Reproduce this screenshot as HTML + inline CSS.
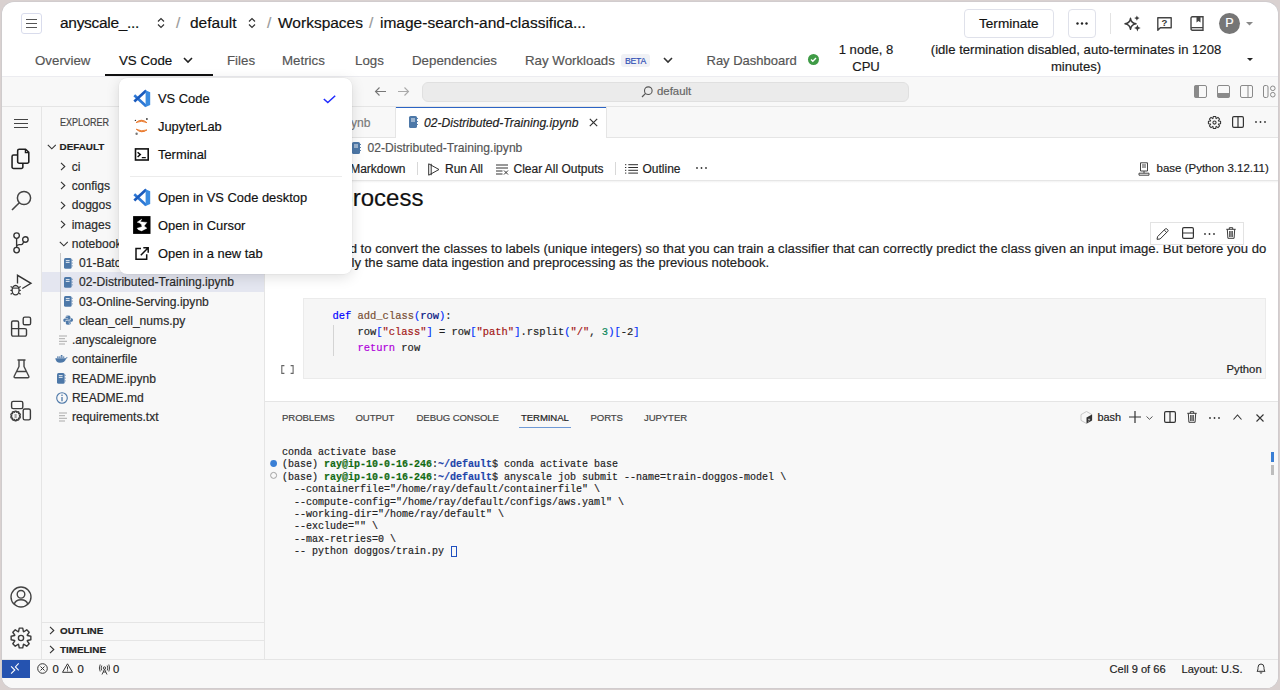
<!DOCTYPE html>
<html><head><meta charset="utf-8">
<style>
*{box-sizing:border-box;margin:0;padding:0}
html,body{width:1280px;height:690px;overflow:hidden;background:#d9d1d0;font-family:"Liberation Sans",sans-serif;color:#1f1f1f}
.a{position:absolute}
.frame{position:absolute;left:2px;top:2px;width:1276px;height:686px;background:#fff;border-radius:12px;overflow:hidden;box-shadow:0 0 0 0.6px #c9c8cc}
.pg{position:absolute;left:-2px;top:-2px;width:1280px;height:690px}
.t{position:absolute;white-space:nowrap;line-height:1;-webkit-text-stroke:0.18px currentColor}
svg{position:absolute;overflow:visible}
.mono{font-family:"Liberation Mono",monospace}
.nav{font-size:13.3px;color:#555;top:54px}
.hd{font-size:15.5px;color:#111;top:15px}
.sb{font-size:12.1px;color:#2a2a2a}
.ptab{font-size:9.6px;color:#444;top:413.3px;letter-spacing:-0.1px}
.term{font-size:10px;color:#222;left:282px;white-space:pre}
.code{font-family:"Liberation Mono",monospace;font-size:10.45px;color:#1f1f1f}
</style></head><body>
<div class="frame"><div class="pg">

<!-- ===== HEADER ===== -->
<div class="a" style="left:21px;top:13px;width:20.5px;height:20.5px;border:1px solid #d9dcec;border-radius:3px"></div>
<svg style="left:26px;top:19px" width="11" height="9"><path d="M0 0.5H11M0 4.5H11M0 8.5H11" stroke="#555" stroke-width="1"/></svg>
<div class="t hd" style="left:60px;letter-spacing:-0.3px">anyscale_...</div>
<svg style="left:157px;top:17px" width="8" height="12"><path d="M1 4.5L4 1.5L7 4.5M1 7.5L4 10.5L7 7.5" fill="none" stroke="#333" stroke-width="1.2"/></svg>
<div class="t hd" style="left:176px;color:#999">/</div>
<div class="t hd" style="left:190px">default</div>
<svg style="left:248px;top:17px" width="8" height="12"><path d="M1 4.5L4 1.5L7 4.5M1 7.5L4 10.5L7 7.5" fill="none" stroke="#333" stroke-width="1.2"/></svg>
<div class="t hd" style="left:267px;color:#999">/</div>
<div class="t hd" style="left:278px">Workspaces</div>
<div class="t hd" style="left:369px;color:#999">/</div>
<div class="t hd" style="left:380px">image-search-and-classifica...</div>

<div class="a" style="left:964px;top:9px;width:90px;height:28.5px;border:1px solid #dfe1ea;border-radius:4px"></div>
<div class="t" style="left:979px;top:16.5px;font-size:13.6px;color:#111">Terminate</div>
<div class="a" style="left:1068px;top:9px;width:28px;height:28.5px;border:1px solid #dfe1ea;border-radius:4px"></div>
<svg style="left:1076px;top:22px" width="12" height="3"><circle cx="1.5" cy="1.5" r="1.2" fill="#222"/><circle cx="6" cy="1.5" r="1.2" fill="#222"/><circle cx="10.5" cy="1.5" r="1.2" fill="#222"/></svg>
<div class="a" style="left:1110px;top:13px;width:1px;height:21px;background:#e3e3e3"></div>
<!-- sparkle -->
<svg style="left:1125px;top:16px" width="16" height="16" viewBox="0 0 16 16"><path d="M5.5 2.3Q6.2 7.1 11 7.8Q6.2 8.5 5.5 13.3Q4.8 8.5 0 7.8Q4.8 7.1 5.5 2.3Z" fill="none" stroke="#3a3a3a" stroke-width="1.45" stroke-linejoin="round"/><path d="M11.9 -0.6L12.7 1.3L14.6 2.1L12.7 2.9L11.9 4.8L11.1 2.9L9.2 2.1L11.1 1.3Z" fill="#3a3a3a"/><path d="M12.4 8.8L13.4 11.1L15.7 12.1L13.4 13.1L12.4 15.4L11.4 13.1L9.1 12.1L11.4 11.1Z" fill="#3a3a3a"/></svg>
<!-- help bubble -->
<svg style="left:1157px;top:17px" width="15" height="14" viewBox="0 0 15 14"><path d="M0.8 13.2V0.8H14.2V10.7H3.3Z" fill="none" stroke="#444" stroke-width="1.4" stroke-linejoin="round"/><text x="7.4" y="9.3" font-size="9.6" font-family="Liberation Sans" font-weight="bold" text-anchor="middle" fill="#3a3a3a">?</text></svg>
<!-- book -->
<svg style="left:1190px;top:16px" width="14" height="15" viewBox="0 0 14 15"><path d="M1 12.2V2.2Q1 0.8 2.4 0.8H13V14.2H2.4Q1 14.2 1 12.8Q1 11.6 2.4 11.6H13" fill="none" stroke="#444" stroke-width="1.4"/><path d="M6.5 1H10.5V6.5L8.5 5L6.5 6.5Z" fill="#444"/></svg>
<div class="a" style="left:1219px;top:13px;width:21px;height:21px;border-radius:50%;background:#767676"></div>
<div class="t" style="left:1225.3px;top:16.9px;font-size:12.6px;color:#fff">P</div>
<svg style="left:1246px;top:22px" width="7" height="4"><path d="M0 0H7L3.5 3.5Z" fill="#888"/></svg>

<!-- nav tabs -->
<div class="t nav" style="left:35px">Overview</div>
<div class="t nav" style="left:119px;color:#111">VS Code</div>
<svg style="left:183px;top:57px" width="10" height="7"><path d="M1 1L5 5L9 1" fill="none" stroke="#222" stroke-width="1.6"/></svg>
<div class="a" style="left:105px;top:73.5px;width:108px;height:2.5px;background:#111"></div>
<div class="t nav" style="left:227px">Files</div>
<div class="t nav" style="left:282px">Metrics</div>
<div class="t nav" style="left:355px">Logs</div>
<div class="t nav" style="left:412px">Dependencies</div>
<div class="t nav" style="left:525px">Ray Workloads</div>
<div class="a" style="left:621px;top:53.5px;width:29px;height:13px;background:#f0f1f5;border-radius:3px"></div>
<div class="t" style="left:625px;top:56.7px;font-size:8.7px;color:#2f4fb5;letter-spacing:-0.25px">BETA</div>
<svg style="left:663px;top:57px" width="10" height="7"><path d="M1 1L5 5L9 1" fill="none" stroke="#333" stroke-width="1.6"/></svg>
<div class="t nav" style="left:706.5px;font-size:13px;top:54.3px">Ray Dashboard</div>
<svg style="left:808px;top:53.5px" width="11" height="11"><circle cx="5.5" cy="5.5" r="5.5" fill="#3f9b46"/><path d="M3 5.6L4.8 7.3L8 4" fill="none" stroke="#fff" stroke-width="1.4"/></svg>
<div class="t" style="left:820px;top:41px;width:92px;text-align:center;font-size:13.1px;line-height:17px;color:#1a1a1a;white-space:normal">1 node, 8<br>CPU</div>
<div class="t" style="left:926px;top:41px;width:300px;text-align:center;font-size:13.1px;line-height:17px;color:#1a1a1a">(idle termination disabled, auto-terminates in 1208<br>minutes)</div>
<svg style="left:1247px;top:57.5px" width="6" height="3"><path d="M0 0H6L3 3Z" fill="#222"/></svg>
<div class="a" style="left:0;top:76px;width:1280px;height:1px;background:#ececf0"></div>

<!-- ===== VS CODE ===== -->
<div class="a" style="left:0;top:77px;width:1280px;height:613px;background:#f8f8f8"></div>
<!-- title bar -->
<div class="a" style="left:0;top:106px;width:1280px;height:1px;background:#e5e5e5"></div>
<svg style="left:374px;top:86px" width="13" height="11"><path d="M12 5.5H1.5M5.5 1.5L1.5 5.5L5.5 9.5" fill="none" stroke="#777" stroke-width="1.1"/></svg>
<svg style="left:397px;top:86px" width="13" height="11"><path d="M1 5.5H11.5M7.5 1.5L11.5 5.5L7.5 9.5" fill="none" stroke="#aaa" stroke-width="1.1"/></svg>
<div class="a" style="left:421.5px;top:81.5px;width:487px;height:20.5px;background:#ebebeb;border:1px solid #e0e0e0;border-radius:6px"></div>
<svg style="left:641px;top:85.5px" width="12" height="12"><circle cx="7.3" cy="4.7" r="3.8" fill="none" stroke="#555" stroke-width="1.1"/><path d="M4.6 7.4L1 11" stroke="#555" stroke-width="1.2"/></svg>
<div class="t" style="left:657px;top:86px;font-size:11.4px;color:#666">default</div>
<!-- layout icons -->
<svg style="left:1194px;top:85px" width="13" height="13"><rect x="0.5" y="0.5" width="12" height="12" rx="1.5" fill="none" stroke="#8a8a8a"/><rect x="0.5" y="0.5" width="4.5" height="12" fill="#8a8a8a"/></svg>
<svg style="left:1217px;top:85px" width="13" height="13"><rect x="0.5" y="0.5" width="12" height="12" rx="1.5" fill="none" stroke="#8a8a8a"/><rect x="0.5" y="8" width="12" height="4.5" fill="#8a8a8a"/></svg>
<svg style="left:1240px;top:85px" width="13" height="13"><rect x="0.5" y="0.5" width="12" height="12" rx="1.5" fill="none" stroke="#8a8a8a"/><path d="M8 0.5V12.5" stroke="#8a8a8a"/></svg>
<svg style="left:1263px;top:85px" width="13" height="13"><rect x="0.5" y="0.5" width="4.5" height="12" rx="1.5" fill="none" stroke="#8a8a8a"/><circle cx="9.8" cy="3.3" r="2.3" fill="none" stroke="#8a8a8a"/><circle cx="9.8" cy="9.7" r="2.3" fill="none" stroke="#8a8a8a"/></svg>

<!-- activity bar -->
<div class="a" style="left:41px;top:107px;width:1px;height:552px;background:#e5e5e5"></div>
<svg style="left:14px;top:119px" width="14" height="9"><path d="M0 0.5H14M0 4.5H14M0 8.5H14" stroke="#444" stroke-width="1"/></svg>
<!-- files -->
<svg style="left:6px;top:142px" width="30" height="30" viewBox="0 0 30 30"><path d="M13.2 7.2H19.6L22.8 10.4V19.7A1.55 1.55 0 0 1 21.25 21.25H13.2A1.55 1.55 0 0 1 11.65 19.7V8.75A1.55 1.55 0 0 1 13.2 7.2Z" fill="none" stroke="#1f1f1f" stroke-width="1.55" stroke-linejoin="round"/><path d="M19.4 7.6V10.6H22.4" fill="none" stroke="#1f1f1f" stroke-width="1.3"/><path d="M11.65 12.9H7.6A1.55 1.55 0 0 0 6.05 14.45V24.9A1.55 1.55 0 0 0 7.6 26.45H15.3A1.55 1.55 0 0 0 16.85 24.9V21.25" fill="none" stroke="#1f1f1f" stroke-width="1.55"/></svg>
<!-- search -->
<svg style="left:11px;top:190px" width="21" height="21" viewBox="0 0 21 21"><circle cx="13" cy="8" r="6.6" fill="none" stroke="#444" stroke-width="1.5"/><path d="M8.3 12.7L1 20" stroke="#444" stroke-width="1.6"/></svg>
<!-- source control -->
<svg style="left:12px;top:232px" width="18" height="22" viewBox="0 0 18 22"><circle cx="4.6" cy="3.6" r="2.75" fill="none" stroke="#333" stroke-width="1.35"/><circle cx="13.4" cy="7.5" r="2.75" fill="none" stroke="#333" stroke-width="1.35"/><circle cx="4.6" cy="18.1" r="2.75" fill="none" stroke="#333" stroke-width="1.35"/><path d="M4.6 6.35V15.35M11.8 9.7L10.6 11.9Q10.2 12.6 9.3 12.6H7Q4.9 12.7 4.6 14.6" fill="none" stroke="#333" stroke-width="1.35"/></svg>
<!-- run debug -->
<svg style="left:10px;top:274px" width="22" height="22" viewBox="0 0 22 22"><path d="M7.5 9.6V1.3L21 9.3L12.3 14.5" fill="none" stroke="#333" stroke-width="1.35" stroke-linejoin="miter"/><ellipse cx="5.6" cy="16.2" rx="3.5" ry="4.7" fill="none" stroke="#333" stroke-width="1.3"/><path d="M2.2 14.1H9" stroke="#333" stroke-width="1.1"/><path d="M0.6 12.6L2.4 13.6M10.7 12.6L8.9 13.6M0.4 16.4H2M10.8 16.4H9.2M0.6 20.3L2.4 19.2M10.7 20.3L8.9 19.2" stroke="#333" stroke-width="1.2"/></svg>
<!-- extensions -->
<svg style="left:4px;top:310px" width="34" height="34" viewBox="0 0 34 34"><path d="M9.1 11H13.1A1.5 1.5 0 0 1 14.6 12.5V18.6H21A1.5 1.5 0 0 1 22.5 20.1V24.6A1.5 1.5 0 0 1 21 26.1H9.1A1.5 1.5 0 0 1 7.6 24.6V12.5A1.5 1.5 0 0 1 9.1 11Z M7.6 18.6H14.6V26.1" fill="none" stroke="#3b3b3b" stroke-width="1.4" stroke-linejoin="round"/><rect x="19.2" y="7.1" width="7.4" height="7.7" rx="1.6" fill="none" stroke="#3b3b3b" stroke-width="1.4"/></svg>
<!-- flask -->
<svg style="left:13px;top:359px" width="17" height="20" viewBox="0 0 17 20"><path d="M4.5 1H12.5M6 1V7.5L1.2 17.2Q0.7 18.8 2.3 18.8H14.7Q16.3 18.8 15.8 17.2L11 7.5V1M3.5 12.5H13.5" fill="none" stroke="#444" stroke-width="1.4" stroke-linejoin="round"/></svg>
<!-- remote explorer -->
<svg style="left:4px;top:394px" width="34" height="34" viewBox="0 0 34 34"><rect x="7.6" y="7.35" width="11.2" height="7.25" rx="1.6" fill="none" stroke="#3b3b3b" stroke-width="1.4"/><rect x="19.2" y="15" width="7.2" height="10.9" rx="1.6" fill="none" stroke="#3b3b3b" stroke-width="1.4"/><path d="M10.72 18.10 L10.92 17.05 L12.28 17.05 L12.48 18.10 L13.12 18.31 L13.90 17.57 L15.00 18.38 L14.54 19.34 L14.94 19.89 L16.00 19.75 L16.43 21.05 L15.49 21.56 L15.49 22.24 L16.43 22.75 L16.00 24.05 L14.94 23.91 L14.54 24.46 L15.00 25.42 L13.90 26.23 L13.12 25.49 L12.48 25.70 L12.28 26.75 L10.92 26.75 L10.72 25.70 L10.08 25.49 L9.30 26.23 L8.20 25.42 L8.66 24.46 L8.26 23.91 L7.20 24.05 L6.77 22.75 L7.71 22.24 L7.71 21.56 L6.77 21.05 L7.20 19.75 L8.26 19.89 L8.66 19.34 L8.20 18.38 L9.30 17.57 L10.08 18.31Z" fill="none" stroke="#3b3b3b" stroke-width="1.3" stroke-linejoin="round"/><path d="M10.5 21H12.7M10.5 23H12.7" stroke="#3b3b3b" stroke-width="0.9"/></svg>
<!-- account -->
<svg style="left:10px;top:586px" width="22" height="22" viewBox="0 0 22 22"><circle cx="11" cy="11" r="10" fill="none" stroke="#444" stroke-width="1.4"/><circle cx="11" cy="8.3" r="3.8" fill="none" stroke="#444" stroke-width="1.4"/><path d="M4.2 18.2Q5.5 13.8 11 13.8Q16.5 13.8 17.8 18.2" fill="none" stroke="#444" stroke-width="1.4"/></svg>
<!-- gear -->
<svg style="left:10px;top:627px" width="22" height="22" viewBox="0 0 22 22"><path d="M8.56 4.65 L9.26 1.15 L12.74 1.15 L13.44 4.65 L13.77 4.79 L16.74 2.81 L19.19 5.26 L17.21 8.23 L17.35 8.56 L20.85 9.26 L20.85 12.74 L17.35 13.44 L17.21 13.77 L19.19 16.74 L16.74 19.19 L13.77 17.21 L13.44 17.35 L12.74 20.85 L9.26 20.85 L8.56 17.35 L8.23 17.21 L5.26 19.19 L2.81 16.74 L4.79 13.77 L4.65 13.44 L1.15 12.74 L1.15 9.26 L4.65 8.56 L4.79 8.23 L2.81 5.26 L5.26 2.81 L8.23 4.79Z" fill="none" stroke="#3a3a3a" stroke-width="1.4" stroke-linejoin="round"/><circle cx="11" cy="11" r="2.6" fill="none" stroke="#3a3a3a" stroke-width="1.4"/></svg>

<!-- SECTION:ACTIVITY -->
<!-- BEGIN SIDEBAR -->
<!-- sidebar -->
<div class="a" style="left:264px;top:107px;width:1px;height:552px;background:#e5e5e5"></div>
<div class="t" style="left:59.5px;top:117.6px;font-size:10.2px;color:#444;transform:scaleX(0.885);transform-origin:0 0">EXPLORER</div>
<svg style="left:46.5px;top:144.3px" width="10" height="6"><path d="M0.8 0.8L4.8 4.8L8.8 0.8" fill="none" stroke="#333" stroke-width="1.1"/></svg>
<div class="t" style="left:59.5px;top:141.80px;font-size:9.9px;font-weight:bold;color:#222;letter-spacing:0px">DEFAULT</div>
<div class="a" style="left:42px;top:272.45px;width:222px;height:19.25px;background:#e4e6f0"></div>
<div class="a" style="left:59.5px;top:253.20px;width:1px;height:77.00px;background:#c8c8c8"></div>
<svg style="left:59.5px;top:162.05px" width="6" height="9"><path d="M1 0.8L4.8 4.5L1 8.2" fill="none" stroke="#333" stroke-width="1.1"/></svg>
<div class="t sb" style="left:71.7px;top:160.85px">ci</div>
<svg style="left:59.5px;top:181.3px" width="6" height="9"><path d="M1 0.8L4.8 4.5L1 8.2" fill="none" stroke="#333" stroke-width="1.1"/></svg>
<div class="t sb" style="left:71.7px;top:180.10px">configs</div>
<svg style="left:59.5px;top:200.55px" width="6" height="9"><path d="M1 0.8L4.8 4.5L1 8.2" fill="none" stroke="#333" stroke-width="1.1"/></svg>
<div class="t sb" style="left:71.7px;top:199.35px">doggos</div>
<svg style="left:59.5px;top:219.8px" width="6" height="9"><path d="M1 0.8L4.8 4.5L1 8.2" fill="none" stroke="#333" stroke-width="1.1"/></svg>
<div class="t sb" style="left:71.7px;top:218.60px">images</div>
<svg style="left:58.5px;top:240.55px" width="10" height="6"><path d="M0.8 0.8L4.8 4.8L8.8 0.8" fill="none" stroke="#333" stroke-width="1.1"/></svg>
<div class="t sb" style="left:71.7px;top:237.85px">notebooks</div>
<svg style="left:63.8px;top:257.50px" width="9" height="11" viewBox="0 0 9 11"><rect x="0" y="0" width="7.6" height="10.8" rx="1.5" fill="#4d78a8"/><path d="M1.8 2.6H5.6M1.8 4.4H5.6" stroke="#fff" stroke-width="0.85"/><path d="M8.2 1.8V2.8M8.2 4.6V5.6M8.2 7.4V8.4" stroke="#4d78a8" stroke-width="0.9"/></svg>
<div class="t sb" style="left:79.1px;top:257.10px">01-Batch-Inference.ipynb</div>
<svg style="left:63.8px;top:276.75px" width="9" height="11" viewBox="0 0 9 11"><rect x="0" y="0" width="7.6" height="10.8" rx="1.5" fill="#4d78a8"/><path d="M1.8 2.6H5.6M1.8 4.4H5.6" stroke="#fff" stroke-width="0.85"/><path d="M8.2 1.8V2.8M8.2 4.6V5.6M8.2 7.4V8.4" stroke="#4d78a8" stroke-width="0.9"/></svg>
<div class="t sb" style="left:79.1px;top:276.35px">02-Distributed-Training.ipynb</div>
<svg style="left:63.8px;top:296.00px" width="9" height="11" viewBox="0 0 9 11"><rect x="0" y="0" width="7.6" height="10.8" rx="1.5" fill="#4d78a8"/><path d="M1.8 2.6H5.6M1.8 4.4H5.6" stroke="#fff" stroke-width="0.85"/><path d="M8.2 1.8V2.8M8.2 4.6V5.6M8.2 7.4V8.4" stroke="#4d78a8" stroke-width="0.9"/></svg>
<div class="t sb" style="left:79.1px;top:295.60px">03-Online-Serving.ipynb</div>
<svg style="left:63.0px;top:315.35px" width="10.3" height="10.3" viewBox="0 0 12 12"><path d="M5.8 0.5Q3 0.5 3 2.2V3.6H6V4.2H1.9Q0.3 4.2 0.3 6.2Q0.3 8.3 1.9 8.3H3V6.8Q3 5.5 4.4 5.5H7.4Q8.7 5.5 8.7 4.2V2.2Q8.7 0.5 5.8 0.5Z" fill="#4d78a8"/><path d="M6.2 11.5Q9 11.5 9 9.8V8.4H6V7.8H10.1Q11.7 7.8 11.7 5.8Q11.7 3.7 10.1 3.7H9V5.2Q9 6.5 7.6 6.5H4.6Q3.3 6.5 3.3 7.8V9.8Q3.3 11.5 6.2 11.5Z" fill="#4d78a8"/><circle cx="4.6" cy="1.8" r="0.6" fill="#f8f8f8"/><circle cx="7.4" cy="10.2" r="0.6" fill="#f8f8f8"/></svg>
<div class="t sb" style="left:79.1px;top:314.85px">clean_cell_nums.py</div>
<svg style="left:58.8px;top:334.8px" width="9" height="10"><path d="M0 1H8M0 3.7H6M0 6.3H8M0 9H6" stroke="#aaa" stroke-width="1"/></svg>
<div class="t sb" style="left:71.9px;top:334.10px">.anyscaleignore</div>
<svg style="left:54.8px;top:354.05px" width="13" height="9" viewBox="0 0 13 9"><path d="M0.3 4.2H10.5Q11 3 12.6 3.3Q12.2 4.5 11.2 4.6Q10 8.8 5 8.8Q1 8.8 0.3 4.2Z" fill="#4d78a8"/><path d="M2 2.5H3.6V3.8H2ZM3.9 2.5H5.5V3.8H3.9ZM5.8 2.5H7.4V3.8H5.8ZM7.7 2.5H9.3V3.8H7.7ZM5.8 0.9H7.4V2.2H5.8Z" fill="#4d78a8"/></svg>
<div class="t sb" style="left:71.9px;top:353.35px">containerfile</div>
<svg style="left:56.5px;top:373.00px" width="9" height="11" viewBox="0 0 9 11"><rect x="0" y="0" width="7.6" height="10.8" rx="1.5" fill="#4d78a8"/><path d="M1.8 2.6H5.6M1.8 4.4H5.6" stroke="#fff" stroke-width="0.85"/><path d="M8.2 1.8V2.8M8.2 4.6V5.6M8.2 7.4V8.4" stroke="#4d78a8" stroke-width="0.9"/></svg>
<div class="t sb" style="left:71.9px;top:372.60px">README.ipynb</div>
<svg style="left:55.5px;top:391.55px" width="12" height="12"><circle cx="6" cy="6" r="5.3" fill="none" stroke="#4d78a8" stroke-width="1.1"/><path d="M6 5V9.2" stroke="#4d78a8" stroke-width="1.3"/><circle cx="6" cy="3.3" r="0.8" fill="#4d78a8"/></svg>
<div class="t sb" style="left:71.9px;top:391.85px">README.md</div>
<svg style="left:58.8px;top:411.8px" width="9" height="10"><path d="M0 1H8M0 3.7H6M0 6.3H8M0 9H6" stroke="#aaa" stroke-width="1"/></svg>
<div class="t sb" style="left:71.9px;top:411.10px">requirements.txt</div>
<div class="a" style="left:42px;top:621.5px;width:222px;height:1px;background:#e5e5e5"></div>
<div class="a" style="left:42px;top:640px;width:222px;height:1px;background:#e5e5e5"></div>
<svg style="left:48.8px;top:626.0px" width="6" height="9"><path d="M1 0.8L4.8 4.5L1 8.2" fill="none" stroke="#333" stroke-width="1.1"/></svg>
<div class="t" style="left:60px;top:625.5px;font-size:9.9px;font-weight:bold;color:#222;letter-spacing:0px">OUTLINE</div>
<svg style="left:48.8px;top:645.0px" width="6" height="9"><path d="M1 0.8L4.8 4.5L1 8.2" fill="none" stroke="#333" stroke-width="1.1"/></svg>
<div class="t" style="left:60px;top:644.5px;font-size:9.9px;font-weight:bold;color:#222;letter-spacing:0px">TIMELINE</div>
<!-- END SIDEBAR -->
<!-- BEGIN EDITOR -->
<!-- tabs bar -->
<div class="a" style="left:265px;top:137px;width:1015px;height:1px;background:#e5e5e5"></div>
<div class="a" style="left:395px;top:107px;width:1px;height:30px;background:#e5e5e5"></div>
<div class="a" style="left:396px;top:107px;width:210px;height:31px;background:#fff"></div>
<div class="a" style="left:396px;top:106.5px;width:210px;height:1.5px;background:#2c64c4"></div>
<div class="a" style="left:606px;top:107px;width:1px;height:30px;background:#e5e5e5"></div>
<div class="t" style="right:909.6px;top:116.5px;font-size:12.1px;color:#7a7a7a">01-Batch-Inference.ipynb</div>
<svg style="left:409px;top:116px" width="9" height="12" viewBox="0 0 9 12"><rect x="0" y="0" width="8" height="12" rx="1.6" fill="#4d78a8"/><path d="M2 3H6M2 5H6" stroke="#fff" stroke-width="0.9"/><path d="M8.4 2V3M8.4 5V6M8.4 8V9" stroke="#4d78a8" stroke-width="1"/></svg>
<div class="t" style="left:424px;top:116.5px;font-size:12.1px;font-style:italic;color:#222">02-Distributed-Training.ipynb</div>
<svg style="left:589px;top:117.5px" width="9" height="9"><path d="M0.8 0.8L8.2 8.2M8.2 0.8L0.8 8.2" stroke="#333" stroke-width="1.2"/></svg>
<!-- tab bar right icons -->
<svg style="left:1208px;top:116px" width="13" height="13" viewBox="0 0 13 13"><path d="M4.93 2.61 L5.32 0.41 L7.68 0.41 L8.07 2.61 L8.14 2.63 L9.97 1.36 L11.64 3.03 L10.37 4.86 L10.39 4.93 L12.59 5.32 L12.59 7.68 L10.39 8.07 L10.37 8.14 L11.64 9.97 L9.97 11.64 L8.14 10.37 L8.07 10.39 L7.68 12.59 L5.32 12.59 L4.93 10.39 L4.86 10.37 L3.03 11.64 L1.36 9.97 L2.63 8.14 L2.61 8.07 L0.41 7.68 L0.41 5.32 L2.61 4.93 L2.63 4.86 L1.36 3.03 L3.03 1.36 L4.86 2.63Z" fill="none" stroke="#333" stroke-width="1.05" stroke-linejoin="round"/><circle cx="6.5" cy="6.5" r="1.6" fill="none" stroke="#333" stroke-width="1.05"/></svg>
<svg style="left:1232px;top:116px" width="12" height="12"><rect x="0.6" y="0.6" width="10.8" height="10.8" rx="1.3" fill="none" stroke="#333" stroke-width="1.2"/><path d="M6 0.6V11.4" stroke="#333" stroke-width="1.2"/></svg>
<svg style="left:1254.5px;top:121px" width="11" height="2"><circle cx="1" cy="1" r="0.9" fill="#333"/><circle cx="5.5" cy="1" r="0.9" fill="#333"/><circle cx="10" cy="1" r="0.9" fill="#333"/></svg>
<!-- editor bg -->
<div class="a" style="left:265px;top:138px;width:1015px;height:262.5px;background:#fff"></div>
<!-- breadcrumb -->
<svg style="left:352px;top:142px" width="9" height="12" viewBox="0 0 9 12"><rect x="0" y="0" width="8" height="12" rx="1.6" fill="#4d78a8"/><path d="M2 3H6M2 5H6" stroke="#fff" stroke-width="0.9"/><path d="M8.4 2V3M8.4 5V6M8.4 8V9" stroke="#4d78a8" stroke-width="1"/></svg>
<div class="t" style="left:367.5px;top:142px;font-size:12.1px;color:#555">02-Distributed-Training.ipynb</div>
<!-- notebook toolbar -->
<div class="t" style="right:874.5px;top:163px;font-size:12px;color:#222">+ Markdown</div>
<div class="a" style="left:417px;top:161.5px;width:1px;height:13.5px;background:#d8d8d8"></div>
<svg style="left:428px;top:163px" width="12" height="13" viewBox="0 0 12 13"><path d="M0.7 0.8L11 6.5L0.7 12.2Z M3.2 0.8V12.2" fill="none" stroke="#333" stroke-width="1" stroke-linejoin="round"/></svg>
<div class="t" style="left:445px;top:163px;font-size:12px;color:#222">Run All</div>
<svg style="left:495.5px;top:164px" width="13" height="11" viewBox="0 0 13 11"><path d="M0 1H12M0 4H12M0 7H6.5M0 10H6.5M8 6.5L12 10.5M12 6.5L8 10.5" stroke="#333" stroke-width="1"/></svg>
<div class="t" style="left:513.5px;top:163px;font-size:12px;color:#222">Clear All Outputs</div>
<div class="a" style="left:615px;top:161.5px;width:1px;height:13.5px;background:#d8d8d8"></div>
<svg style="left:625px;top:163.5px" width="13" height="11" viewBox="0 0 13 11"><path d="M0 0.7H1.3M0 3.5H1.3M0 6.3H1.3M0 9.1H1.3M3.3 0.7H13M3.3 3.5H13M3.3 6.3H13M3.3 9.1H13" stroke="#222" stroke-width="0.95"/></svg>
<div class="t" style="left:642.5px;top:163px;font-size:12px;color:#222">Outline</div>
<svg style="left:695.5px;top:167.3px" width="11" height="2"><circle cx="1" cy="1" r="0.9" fill="#333"/><circle cx="5.5" cy="1" r="0.9" fill="#333"/><circle cx="10" cy="1" r="0.9" fill="#333"/></svg>
<svg style="left:1138px;top:162px" width="12" height="14" viewBox="0 0 12 14"><path d="M2.5 0.8H9.5V9H2.5Z M4 3H8M4 5H8M1 13.2H11V11.2H1Z M6 9V11.2" fill="none" stroke="#444" stroke-width="1"/></svg>
<div class="t" style="left:1156.5px;top:163.3px;font-size:11.5px;color:#222">base (Python 3.12.11)</div>
<div class="a" style="left:265px;top:180px;width:1015px;height:1px;background:#e6e6e6"></div>
<div class="a" style="left:265px;top:181px;width:1015px;height:2px;background:linear-gradient(#f2f2f2,#fff)"></div>
<!-- heading -->
<div class="t" style="left:302px;top:185.6px;font-size:24px;color:#111">Preprocess</div>
<!-- paragraph -->
<div class="t" style="left:302px;top:241.5px;font-size:13.11px;color:#222">You need to convert the classes to labels (unique integers) so that you can train a classifier that can correctly predict the class given an input image. But before you do</div>
<div class="t" style="left:300.6px;top:255.6px;font-size:13.11px;color:#222">that, apply the same data ingestion and preprocessing as the previous notebook.</div>
<!-- cell toolbar -->
<div class="a" style="left:1149.5px;top:221.8px;width:94px;height:23px;background:#fff;border:1px solid #e3e3e3"></div>
<svg style="left:1156px;top:227.5px" width="13" height="12" viewBox="0 0 13 12"><path d="M1 11.3L1.6 8.6L9.3 0.9Q10 0.2 10.8 0.9L11.8 1.9Q12.5 2.6 11.8 3.3L4.1 11Z M8.2 2L10.8 4.6" fill="none" stroke="#333" stroke-width="1" stroke-linejoin="round"/></svg>
<svg style="left:1181.5px;top:227px" width="12" height="12"><rect x="0.6" y="0.6" width="10.8" height="10.8" rx="1.3" fill="none" stroke="#333" stroke-width="1.2"/><path d="M0.6 6H11.4" stroke="#333" stroke-width="1.2"/></svg>
<svg style="left:1203.5px;top:232.5px" width="11" height="2"><circle cx="1" cy="1" r="0.9" fill="#333"/><circle cx="5.5" cy="1" r="0.9" fill="#333"/><circle cx="10" cy="1" r="0.9" fill="#333"/></svg>
<svg style="left:1225.5px;top:227px" width="10" height="12" viewBox="0 0 10 12"><path d="M0.3 2.3H9.7M3.3 2.3V0.7H6.7V2.3M1.3 2.3L1.9 11.3H8.1L8.7 2.3M3.7 4V10M5 4V10M6.3 4V10" fill="none" stroke="#333" stroke-width="0.95"/></svg>
<!-- code cell -->
<div class="a" style="left:303px;top:298px;width:962.5px;height:80.5px;background:#f6f6f6;border:1px solid #ebebeb"></div>
<div class="a" style="left:332.5px;top:324.5px;width:1px;height:31px;background:#d4d4d4"></div>
<div class="t code" style="left:332.5px;top:310.5px"><span style="color:#0000ff">def</span> <span style="color:#774d33">add_class</span><span style="color:#0431fa">(</span><span style="color:#001080">row</span><span style="color:#0431fa">)</span>:</div>
<div class="t code" style="left:357.5px;top:326.8px"><span style="color:#1f1f1f">row</span><span style="color:#0431fa">[</span><span style="color:#a31515">"class"</span><span style="color:#0431fa">]</span> = row<span style="color:#0431fa">[</span><span style="color:#a31515">"path"</span><span style="color:#0431fa">]</span>.rsplit<span style="color:#0431fa">(</span><span style="color:#a31515">"/"</span>, <span style="color:#098658">3</span><span style="color:#0431fa">)[</span>-2<span style="color:#0431fa">]</span></div>
<div class="t code" style="left:357.5px;top:342.6px"><span style="color:#af00db">return</span> row</div>
<svg style="left:280px;top:364px" width="16" height="11"><path d="M4.4 1.6H1.8V9.4H4.4M10.6 1.6H13.1V9.4H10.6" fill="none" stroke="#666" stroke-width="1.1"/></svg>
<div class="t" style="left:1226.5px;top:363.5px;font-size:11.3px;color:#222">Python</div>
<!-- END EDITOR -->

<!-- BEGIN PANEL -->
<div class="a" style="left:265px;top:400.5px;width:1015px;height:1px;background:#e5e5e5"></div>
<div class="t ptab" style="left:282px">PROBLEMS</div>
<div class="t ptab" style="left:355.5px">OUTPUT</div>
<div class="t ptab" style="left:416.5px">DEBUG CONSOLE</div>
<div class="t ptab" style="left:521px;color:#222">TERMINAL</div>
<div class="a" style="left:518.5px;top:426.5px;width:52.5px;height:1px;background:#6f9ad6"></div>
<div class="t ptab" style="left:590.5px">PORTS</div>
<div class="t ptab" style="left:644px">JUPYTER</div>
<!-- panel right icons -->
<svg style="left:1080px;top:411px" width="13" height="13" viewBox="0 0 13 13"><path d="M6.5 0.5L12 3.6V9.4L6.5 12.5L1 9.4V3.6Z" fill="none" stroke="#bbb" stroke-width="0.8"/><path d="M6.5 6.5L12 3.6V9.4L6.5 12.5Z" fill="#333"/><path d="M8 8.3H10.2M8.3 10.3L9.5 9.3" stroke="#fff" stroke-width="0.7"/></svg>
<div class="t" style="left:1097.5px;top:412px;font-size:10.9px;color:#222">bash</div>
<svg style="left:1129px;top:411px" width="12" height="12"><path d="M6 0V12M0 6H12" stroke="#333" stroke-width="1.2"/></svg>
<svg style="left:1146px;top:416px" width="7" height="4"><path d="M0.5 0.5L3.5 3.3L6.5 0.5" fill="none" stroke="#444" stroke-width="0.9"/></svg>
<svg style="left:1163.5px;top:411px" width="12" height="12"><rect x="0.6" y="0.6" width="10.8" height="10.8" rx="1.3" fill="none" stroke="#333" stroke-width="1.2"/><path d="M6 0.6V11.4" stroke="#333" stroke-width="1.2"/></svg>
<svg style="left:1186.5px;top:411px" width="10" height="12" viewBox="0 0 10 12"><path d="M0.3 2.3H9.7M3.3 2.3V0.7H6.7V2.3M1.3 2.3L1.9 11.3H8.1L8.7 2.3M3.7 4V10M5 4V10M6.3 4V10" fill="none" stroke="#333" stroke-width="0.95"/></svg>
<svg style="left:1209px;top:416.5px" width="11" height="2"><circle cx="1" cy="1" r="0.9" fill="#333"/><circle cx="5.5" cy="1" r="0.9" fill="#333"/><circle cx="10" cy="1" r="0.9" fill="#333"/></svg>
<svg style="left:1233px;top:414px" width="9" height="6"><path d="M0.5 5.5L4.5 1L8.5 5.5" fill="none" stroke="#333" stroke-width="1.1"/></svg>
<svg style="left:1256px;top:413.5px" width="8" height="8"><path d="M0.5 0.5L7.5 7.5M7.5 0.5L0.5 7.5" stroke="#333" stroke-width="1.1"/></svg>
<!-- terminal text -->
<div class="t term mono" style="top:448.1px">conda activate base</div>
<svg style="left:270px;top:459.8px" width="7" height="7"><circle cx="3.6" cy="3.5" r="3.4" fill="#3a7fd5"/></svg>
<div class="t term mono" style="top:460.4px">(base) <b style="color:#116a11">ray@ip-10-0-16-246</b>:<b style="color:#1c44aa">~/default</b>$ conda activate base</div>
<svg style="left:270px;top:472.2px" width="7" height="7"><circle cx="3.6" cy="3.4" r="3" fill="none" stroke="#999" stroke-width="0.9"/></svg>
<div class="t term mono" style="top:472.8px">(base) <b style="color:#116a11">ray@ip-10-0-16-246</b>:<b style="color:#1c44aa">~/default</b>$ anyscale job submit --name=train-doggos-model \</div>
<div class="t term mono" style="top:485.2px">  --containerfile="/home/ray/default/containerfile" \</div>
<div class="t term mono" style="top:497.6px">  --compute-config="/home/ray/default/configs/aws.yaml" \</div>
<div class="t term mono" style="top:510.0px">  --working-dir="/home/ray/default" \</div>
<div class="t term mono" style="top:522.4px">  --exclude="" \</div>
<div class="t term mono" style="top:534.8px">  --max-retries=0 \</div>
<div class="t term mono" style="top:547.2px">  -- python doggos/train.py </div>
<div class="a" style="left:450.5px;top:546px;width:6px;height:10.5px;border:1px solid #2050c0"></div>
<!-- scrollbar marks -->
<div class="a" style="left:1271.2px;top:452.2px;width:3.2px;height:9.8px;background:#3a7fd5"></div>
<div class="a" style="left:1271.2px;top:464.8px;width:3.2px;height:9.8px;background:#bdbdbd"></div>
<!-- END PANEL -->
<!-- BEGIN STATUS -->
<div class="a" style="left:0;top:659.3px;width:1280px;height:1px;background:#e5e5e5"></div>
<div class="a" style="left:2px;top:660px;width:28px;height:18px;background:#2553b0"></div>
<svg style="left:0;top:655px" width="30" height="25"><path d="M11.1 11.3L14.8 15L11.1 18.7M18.7 8.3L15.4 12L18.7 15.4" fill="none" stroke="#fff" stroke-width="1.1"/></svg>
<svg style="left:37px;top:663px" width="11" height="11"><circle cx="5.5" cy="5.5" r="4.8" fill="none" stroke="#333" stroke-width="1"/><path d="M3.5 3.5L7.5 7.5M7.5 3.5L3.5 7.5" stroke="#333" stroke-width="1"/></svg>
<div class="t" style="left:52.5px;top:664px;font-size:11.3px;color:#222">0</div>
<svg style="left:62px;top:663px" width="11" height="10"><path d="M5.5 0.8L10.5 9.3H0.5Z" fill="none" stroke="#333" stroke-width="1" stroke-linejoin="round"/><path d="M5.5 3.5V6.5M5.5 7.4V8.3" stroke="#333" stroke-width="1"/></svg>
<div class="t" style="left:77.5px;top:664px;font-size:11.3px;color:#222">0</div>
<svg style="left:98.5px;top:663.5px" width="11" height="11" viewBox="0 0 11 11"><circle cx="5.5" cy="4" r="1.2" fill="none" stroke="#333" stroke-width="0.9"/><path d="M5.5 5.2L3 10.5M5.5 5.2L8 10.5M4 8H7M2.8 1.5Q1.5 4 2.8 6.5M8.2 1.5Q9.5 4 8.2 6.5M1.2 0.5Q-0.5 4 1.2 7.5M9.8 0.5Q11.5 4 9.8 7.5" fill="none" stroke="#333" stroke-width="0.9"/></svg>
<div class="t" style="left:113px;top:664px;font-size:11.3px;color:#222">0</div>
<div class="t" style="left:1109.5px;top:664px;font-size:11.1px;color:#222">Cell 9 of 66</div>
<div class="t" style="left:1181.5px;top:664px;font-size:11.1px;color:#222">Layout: U.S.</div>
<svg style="left:1256px;top:663px" width="10" height="11" viewBox="0 0 10 11"><path d="M1 8.3Q2 7.3 2 5.5V4.5Q2 1 5 1Q8 1 8 4.5V5.5Q8 7.3 9 8.3Z M3.8 9.6Q5 10.8 6.2 9.6" fill="none" stroke="#333" stroke-width="1" stroke-linejoin="round"/></svg>
<!-- END STATUS -->

<!-- SECTION:STATUS -->
<!-- BEGIN MENU -->
<div class="a" style="left:119px;top:78px;width:233px;height:195.5px;background:#fff;border-radius:8px;box-shadow:0 3px 14px rgba(0,0,0,0.13),0 0 0 0.5px rgba(0,0,0,0.05)"></div>
<svg style="left:130px;top:86px" width="24" height="24" viewBox="0 0 24 24"><path d="M4.3 9.2L16.2 20.3" stroke="#2d78d6" stroke-width="2.7"/><path d="M16.2 4.6L4.3 15.4" stroke="#1b5bbd" stroke-width="2.7"/><path d="M15.6 4.2L20.2 6.3V18.9L15.6 20.9Z" fill="#3a8be0"/></svg>
<div class="t" style="left:158px;top:92.8px;font-size:12.9px;color:#111">VS Code</div>
<svg style="left:323px;top:94.5px" width="13" height="9"><path d="M0.8 4L4.8 7.6L12.2 0.7" fill="none" stroke="#1f2bff" stroke-width="1.5"/></svg>
<!-- jupyter -->
<svg style="left:130px;top:114px" width="24" height="24" viewBox="0 0 24 24"><path d="M6 8.6Q11.5 3.8 17 8.7Q11.5 5.9 6 8.6Z" fill="#e8711f" stroke="#e8711f" stroke-width="0.8" stroke-linejoin="round"/><path d="M6.2 15.2Q11.5 20 17 15.9Q11.5 18 6.2 15.2Z" fill="#e8711f" stroke="#e8711f" stroke-width="0.8" stroke-linejoin="round"/><circle cx="16.9" cy="5" r="1" fill="#4a4a4a"/><circle cx="5.4" cy="6.4" r="0.7" fill="#333"/><circle cx="6.6" cy="19.8" r="1.2" fill="#777"/></svg>
<div class="t" style="left:158px;top:120.8px;font-size:12.9px;color:#111">JupyterLab</div>
<!-- menu terminal -->
<svg style="left:130px;top:142px" width="24" height="24" viewBox="0 0 24 24"><rect x="5.5" y="6.9" width="12.7" height="11.1" fill="none" stroke="#111" stroke-width="1.6"/><path d="M7.6 10.2L10.3 12.6L7.6 15" fill="none" stroke="#111" stroke-width="1.5"/><path d="M11.8 15.6H15.8" stroke="#111" stroke-width="1.4"/></svg>
<div class="t" style="left:158px;top:148.8px;font-size:12.9px;color:#111">Terminal</div>
<div class="a" style="left:129.5px;top:176px;width:212px;height:1px;background:#ececec"></div>
<svg style="left:130px;top:184.8px" width="24" height="24" viewBox="0 0 24 24"><path d="M4.3 9.2L16.2 20.3" stroke="#2d78d6" stroke-width="2.7"/><path d="M16.2 4.6L4.3 15.4" stroke="#1b5bbd" stroke-width="2.7"/><path d="M15.6 4.2L20.2 6.3V18.9L15.6 20.9Z" fill="#3a8be0"/></svg>
<div class="t" style="left:158px;top:191.8px;font-size:12.9px;color:#111">Open in VS Code desktop</div>
<!-- cursor -->
<svg style="left:130px;top:213px" width="24" height="24" viewBox="0 0 24 24"><rect x="3.1" y="3.1" width="17.4" height="17.8" fill="#000"/><path d="M11.8 6.1L7.2 9.2L9.6 10.1L11.4 11.6L12 13.7L7.1 15.2L8.3 16.7L11.6 17.9L16.9 15.2L14.1 12.9L16.9 9.4L10.3 8.8Z" fill="#fff" stroke="#fff" stroke-width="0.4" stroke-linejoin="round"/></svg>
<div class="t" style="left:158px;top:219.8px;font-size:12.9px;color:#111">Open in Cursor</div>
<!-- external -->
<svg style="left:134.5px;top:247px" width="14" height="13" viewBox="0 0 14 13"><path d="M6 1.5H1V12.2H11.7V7.3" fill="none" stroke="#111" stroke-width="1.5"/><path d="M8.3 0.8H13.2V5.7M13.2 0.8L5.8 8.2" fill="none" stroke="#111" stroke-width="1.5"/></svg>
<div class="t" style="left:158px;top:247.8px;font-size:12.9px;color:#111">Open in a new tab</div>
<!-- END MENU -->


</div></div>
</body></html>
